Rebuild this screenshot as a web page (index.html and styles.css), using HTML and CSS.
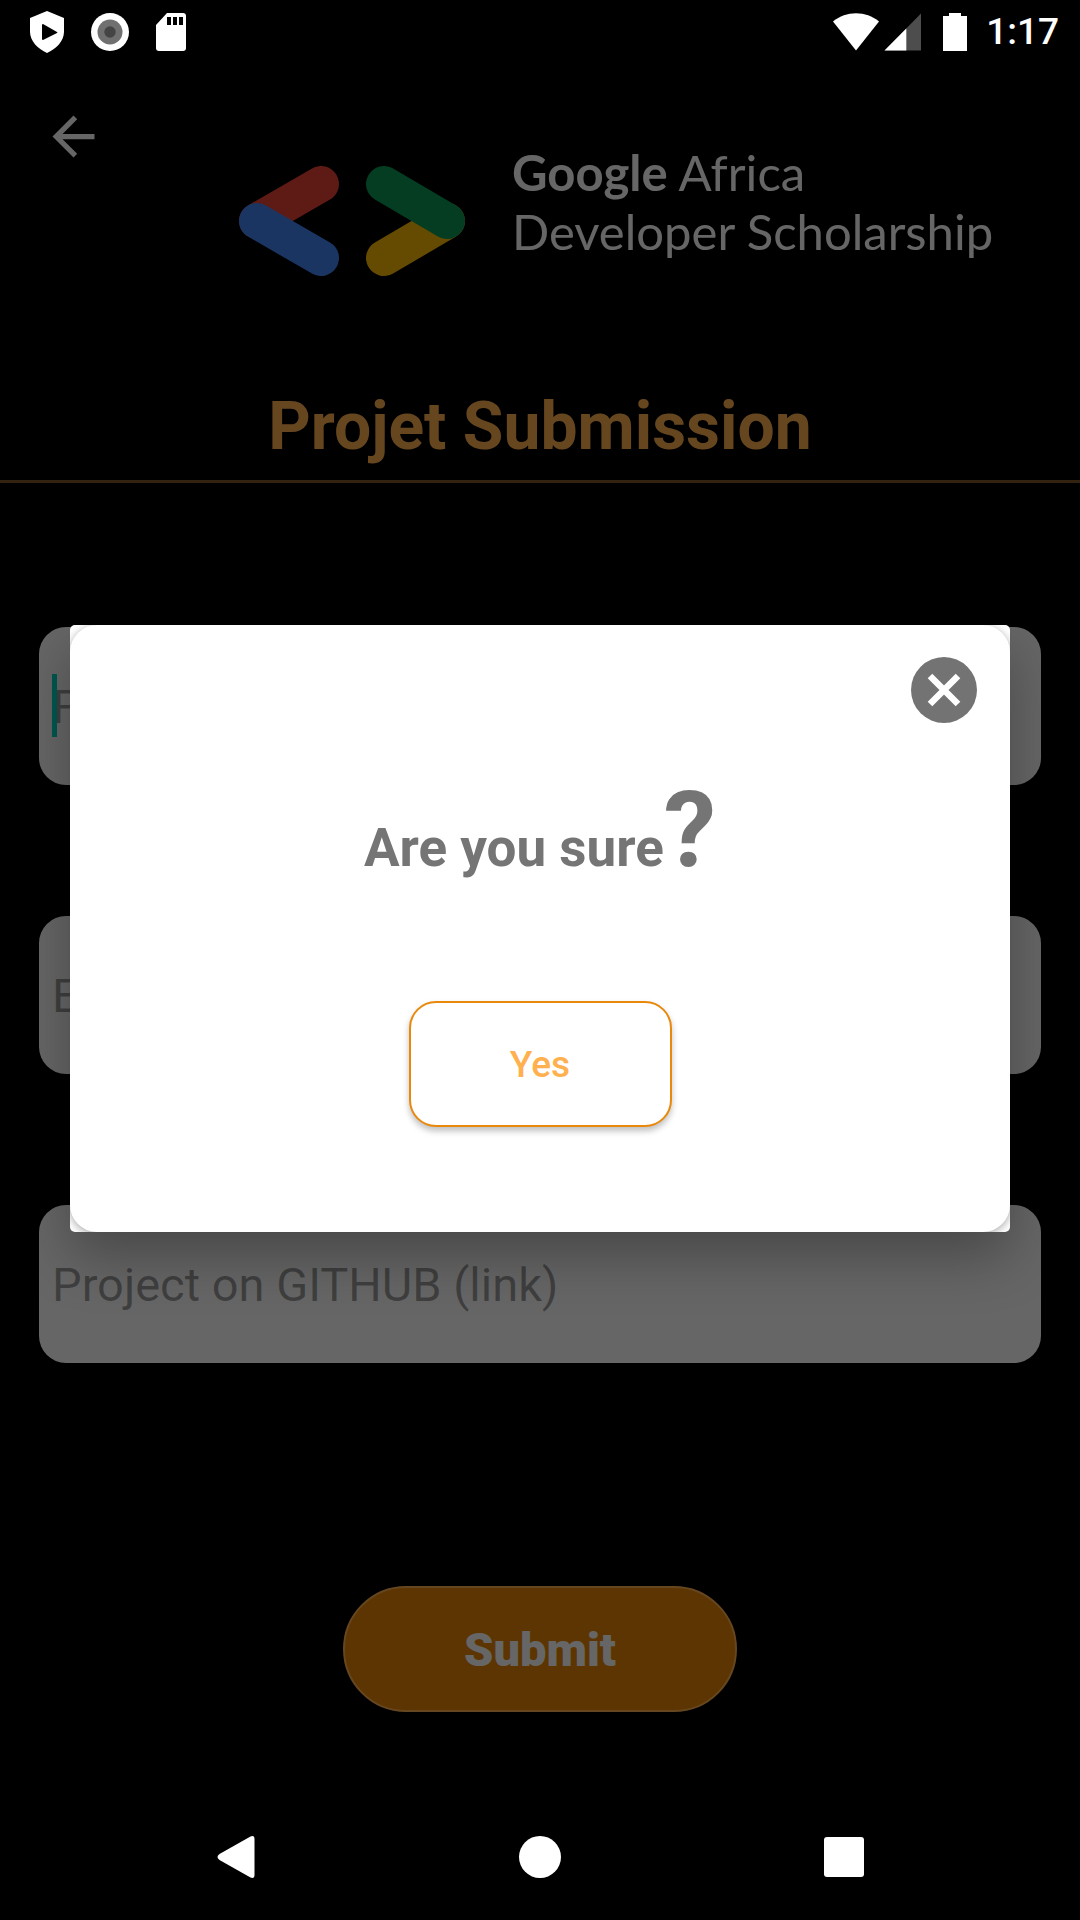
FILE: index.html
```html
<!DOCTYPE html>
<html lang="en">
<head>
<meta charset="utf-8">
<meta name="viewport" content="width=device-width, initial-scale=1">
<title>Projet Submission</title>
<link rel="stylesheet" href="styles.css">
</head>
<body>
<div class="screen">
  <div class="status-bar">
    <div class="status-group status-left">
      <svg width="36" height="42" viewBox="0 0 36 42"><path fill="#fff" d="M18 0 35 7v14c0 9-8 17-17 21C9 38 1 30 1 21V7z"/><path d="M13 14v14q0 1 1 1l14-7q1-1 0-1L14 13q-1 0-1 1z"/></svg>
      <svg width="38" height="38" viewBox="0 0 38 38"><circle cx="19" cy="19" r="19" fill="#fff"/><circle cx="19" cy="19" r="12.500" fill="#707070"/><circle cx="19" cy="19" r="5.700" fill="#444"/></svg>
      <svg width="32" height="38" viewBox="0 0 32 38"><path fill="#fff" d="M12 0h16q3 0 3 3v32q0 3-3 3H4q-3 0-3-3V12z"/><path d="M12 4h4v8h-4zM18 4h4v8h-4zM24 4h4v8h-4z"/></svg>
    </div>
    <div class="status-group status-right">
      <svg width="46" height="38" viewBox="0 0 46 38"><path fill="#fff" d="M0 8.500C13-2.500 33-2.500 46 8.500L23 37.500z"/></svg>
      <svg width="38" height="38" viewBox="0 0 38 38"><path fill="#4d4d4d" d="M37 .5v37H.5z"/><path fill="#fff" d="M22.300 15.500v22H.5z"/></svg>
      <svg class="battery" width="24" height="38" viewBox="0 0 24 38"><path fill="#fff" d="M6 0h12v3h6v35H0V3h6z"/></svg>
      <span class="clock">1:17</span>
    </div>
  </div>

  <main class="app">
    <header class="app-header">
      <button class="icon-button back" type="button" aria-label="Back">
        <svg width="63" height="63" viewBox="0 0 24 24"><path fill="#fff" d="M20 11H7.830l5.590-5.590L12 4l-8 8 8 8 1.410-1.410L7.830 13H20z"/></svg>
      </button>
      <svg class="logo" width="226" height="110" viewBox="239 166 226 110" fill="none" stroke-width="36" stroke-linecap="round">
        <path stroke="#ea4335" d="M257 221 321 184"/><path stroke="#4285f4" d="M257 221 321 258"/>
        <path stroke="#fbbc04" d="M384 258 447 221"/><path stroke="#0a9953" d="M384 184 447 221"/>
      </svg>
      <p class="brand"><b>Google</b> Africa<br>Developer Scholarship</p>
    </header>
    <h1 class="title">Projet Submission</h1>
    <form class="form">
      <div class="field"><input class="input" type="text" aria-label="First Name" placeholder="First Name"><span class="caret"></span></div>
      <div class="field"><input class="input" type="email" aria-label="Email Address" placeholder="Email Address"></div>
      <div class="field"><input class="input" type="text" aria-label="Project on GITHUB (link)" placeholder="Project on GITHUB (link)"></div>
      <button class="submit" type="button">Submit</button>
    </form>
  </main>

  <nav class="nav-bar">
    <button class="icon-button" type="button" aria-label="Back"><svg width="42" height="42" viewBox="0 0 42 42"><path fill="#fff" d="M35.500 .5q4-1.500 4 2.500v36q0 4-4 2.500L4.500 24q-4-3 0-6z"/></svg></button>
    <button class="icon-button" type="button" aria-label="Home"><svg width="42" height="42" viewBox="0 0 42 42"><circle cx="21" cy="21" r="21" fill="#fff"/></svg></button>
    <button class="icon-button" type="button" aria-label="Recent apps"><svg width="42" height="42" viewBox="0 0 42 42"><rect x="1" y="1" width="40" height="40" rx="3" fill="#fff"/></svg></button>
  </nav>

  <div class="scrim">
    <div class="dialog" role="dialog" aria-modal="true" aria-labelledby="question">
      <div class="card">
        <button class="icon-button close" type="button" aria-label="Close">
          <svg width="66" height="66" viewBox="0 0 66 66"><circle cx="33" cy="33" r="33" fill="#737373"/><path stroke="#fff" stroke-width="6.500" d="m19 19 28 28M47 19 19 47"/></svg>
        </button>
        <p class="question" id="question">Are you sure<span class="mark">?</span></p>
        <button class="yes" type="button">Yes</button>
      </div>
    </div>
  </div>
</div>
</body>
</html>
```
FILE: styles.css
```css
* { box-sizing: border-box; }

body {
  margin: 0;
  background: #000;
  font-family: Roboto, "Liberation Sans", sans-serif;
}

button { font-family: inherit; }
svg { display: block; }

.screen {
  position: relative;
  display: flex;
  flex-direction: column;
  min-height: 100vh;
}

.status-bar {
  position: relative;
  z-index: 2;
  display: flex;
  justify-content: space-between;
  height: 63px;
  padding: 0 21px 0 29px;
}

.status-group { display: flex; align-items: center; }
.status-left { gap: 26px; }
.status-right { gap: 5px; }
.battery { margin: 0 14px 0 16px; }

.clock {
  color: #fff;
  font-size: 37px;
  font-weight: 500;
  line-height: 44px;
}

.icon-button {
  padding: 0;
  border: 0;
  background: none;
}

.app { flex: 1; }

.app-header {
  display: flex;
  align-items: flex-start;
  padding: 42px 42px 0;
}

.logo { margin: 61px 47px 0 134px; }

.brand {
  margin: 38px 0 0;
  color: #fff;
  font-family: Lato, "Open Sans", sans-serif;
  font-size: 49px;
  line-height: 59px;
  white-space: nowrap;
}

.title {
  margin: 112px 0 0;
  padding-bottom: 14px;
  border-bottom: 3px solid #80562a;
  color: #ffb04f;
  font-size: 66px;
  line-height: 78px;
  text-align: center;
}

.form {
  display: flex;
  flex-direction: column;
  gap: 131px;
  padding: 144px 39px 82px;
}

.field { position: relative; }

.input {
  display: block;
  width: 100%;
  height: 158px;
  padding: 0 13px;
  border: 0;
  border-radius: 27px;
  background: #fff;
  font-family: inherit;
  font-size: 47px;
}

.input::placeholder { color: rgba(0, 0, 0, .38); opacity: 1; }

.caret {
  position: absolute;
  top: 47px;
  left: 13px;
  width: 5px;
  height: 63px;
  background: #03dac5;
}

.submit {
  align-self: center;
  width: 394px;
  height: 126px;
  margin-top: 92px;
  border: 2px solid #ffb04f;
  border-radius: 63px;
  background: #e68605;
  color: #fff;
  font-size: 47px;
  font-weight: 900;
}

.nav-bar {
  position: relative;
  z-index: 2;
  display: flex;
  justify-content: center;
  align-items: center;
  gap: 262px;
  height: 126px;
}

.scrim {
  position: absolute;
  inset: 0;
  z-index: 1;
  display: grid;
  place-items: center;
  padding: 63px 70px 126px;
  background: rgba(0, 0, 0, .6);
}

.dialog {
  width: 100%;
  border-radius: 5px;
  background: #fff;
  box-shadow: 0 24px 56px rgba(0, 0, 0, .3);
  overflow: hidden;
}

.card {
  display: flex;
  flex-direction: column;
  align-items: center;
  padding: 32px 33px 105px;
  border-radius: 27px;
  box-shadow: 0 2px 8px rgba(0, 0, 0, .35);
}

.close { align-self: flex-end; }

.question {
  margin: 46px 0 0;
  color: #757575;
  font-size: 53px;
  font-weight: 700;
  line-height: 123px;
}

.mark { font-size: 105px; }

.yes {
  width: 263px;
  height: 126px;
  margin-top: 91px;
  border: 2px solid #e8890c;
  border-radius: 27px;
  background: #fff;
  box-shadow: 0 4px 6px rgba(0, 0, 0, .25);
  color: #ffb04f;
  font-size: 37px;
  font-weight: 500;
}
```
